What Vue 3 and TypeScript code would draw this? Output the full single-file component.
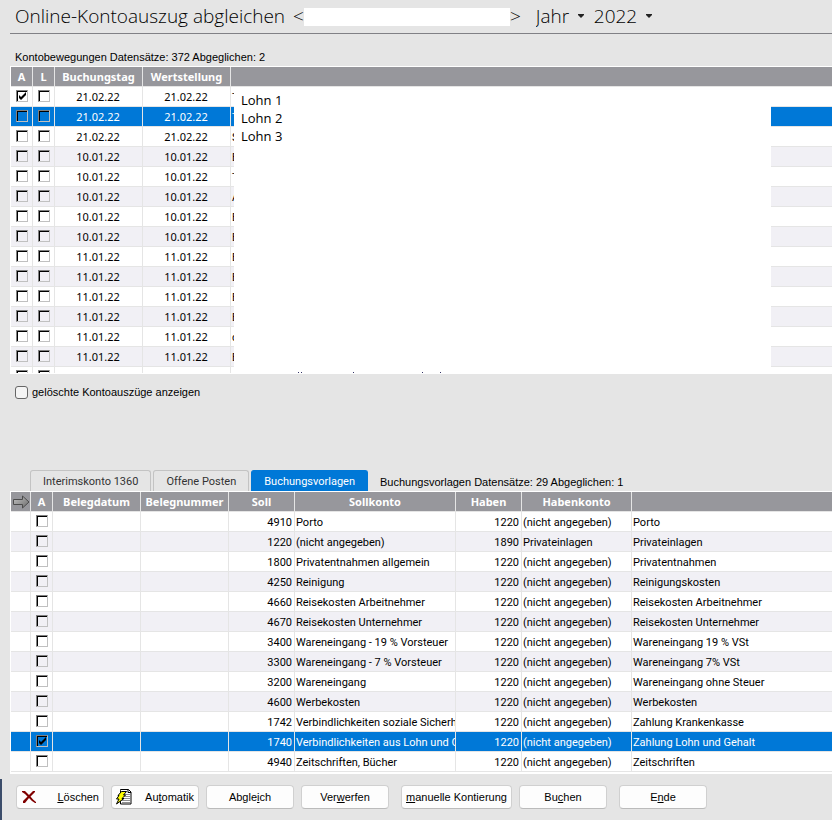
<script setup lang="ts">
import { ref } from 'vue'

interface Movement { a: boolean; l: boolean; date: string; text: string }
interface Template { a: boolean; soll: string; sollkonto: string; haben: string; habenkonto: string; text: string }

const years = ['2022', '2021', '2020']
const year = ref('2022')
const period = ref('Jahr')
const showDeleted = ref(false)
const selectedMovement = ref(1)
const selectedTemplate = ref(11)

const initials = ['T', 'T', 'S', 'E', 'T', 'A', 'E', 'E', 'E', 'E', 'E', 'E', 'c', 'E', '']
const movements = ref<Movement[]>(
  initials.map((text, i) => ({
    a: i === 0,
    l: false,
    date: i < 3 ? '21.02.22' : i < 8 ? '10.01.22' : '11.01.22',
    text,
  })),
)

const none = '(nicht angegeben)'
const rows: [string, string, string, string, string][] = [
  ['4910', 'Porto', '1220', none, 'Porto'],
  ['1220', none, '1890', 'Privateinlagen', 'Privateinlagen'],
  ['1800', 'Privatentnahmen allgemein', '1220', none, 'Privatentnahmen'],
  ['4250', 'Reinigung', '1220', none, 'Reinigungskosten'],
  ['4660', 'Reisekosten Arbeitnehmer', '1220', none, 'Reisekosten Arbeitnehmer'],
  ['4670', 'Reisekosten Unternehmer', '1220', none, 'Reisekosten Unternehmer'],
  ['3400', 'Wareneingang - 19 % Vorsteuer', '1220', none, 'Wareneingang 19 % VSt'],
  ['3300', 'Wareneingang - 7 % Vorsteuer', '1220', none, 'Wareneingang 7% VSt'],
  ['3200', 'Wareneingang', '1220', none, 'Wareneingang ohne Steuer'],
  ['4600', 'Werbekosten', '1220', none, 'Werbekosten'],
  ['1742', 'Verbindlichkeiten soziale Sicherheit', '1220', none, 'Zahlung Krankenkasse'],
  ['1740', 'Verbindlichkeiten aus Lohn und Gehalt', '1220', none, 'Zahlung Lohn und Gehalt'],
  ['4940', 'Zeitschriften, Bücher', '1220', none, 'Zeitschriften'],
]
const templates = ref<Template[]>(
  rows.map(([soll, sollkonto, haben, habenkonto, text], i) => ({ a: i === 11, soll, sollkonto, haben, habenkonto, text })),
)

const tabs = ['Interimskonto 1360', 'Offene Posten', 'Buchungsvorlagen']
const activeTab = ref(2)
</script>

<template>
  <main class="window">
    <header class="title-bar">
      <h1>Online-Kontoauszug abgleichen</h1>
      <span class="account">&lt;<span class="account-name"></span>&gt;</span>
      <label class="picker">
        <select v-model="period" aria-label="Zeitraum"><option>Jahr</option></select>
        <svg width="6" height="4" viewBox="0 0 6 4"><path d="M0 0h6v1L3 4 0 1z" fill="#222" /></svg>
      </label>
      <label class="picker">
        <select v-model="year" aria-label="Jahr"><option v-for="y in years" :key="y">{{ y }}</option></select>
        <svg width="6" height="4" viewBox="0 0 6 4"><path d="M0 0h6v1L3 4 0 1z" fill="#222" /></svg>
      </label>
    </header>

    <p class="caption">Kontobewegungen Datensätze: 372 Abgeglichen: 2</p>
    <section class="grid movements">
      <table>
        <colgroup><col class="w22" /><col class="w22" /><col class="w88" /><col class="w88" /><col /></colgroup>
        <thead>
          <tr><th>A</th><th>L</th><th>Buchungstag</th><th>Wertstellung</th><th></th></tr>
        </thead>
        <tbody>
          <tr v-for="(m, i) in movements" :key="i" :class="{ selected: i === selectedMovement }" @click="selectedMovement = i">
            <td class="tick"><input v-model="m.a" type="checkbox" aria-label="A" /></td>
            <td class="tick"><input v-model="m.l" type="checkbox" aria-label="L" /></td>
            <td class="date">{{ m.date }}</td>
            <td class="date">{{ m.date }}</td>
            <td>{{ m.text }}</td>
          </tr>
        </tbody>
      </table>
      <div class="note">
        <p>Lohn 1</p>
        <p>Lohn 2</p>
        <p>Lohn 3</p>
        <svg width="220" height="1" viewBox="0 0 220 1"><path d="M57 .5h1M60 .5h1M112 .5h1M181 .5h1M199 .5h1" stroke="#336" /></svg>
      </div>
    </section>

    <label class="deleted">
      <input v-model="showDeleted" type="checkbox" />
      gelöschte Kontoauszüge anzeigen
    </label>

    <nav class="tabs">
      <button v-for="(t, i) in tabs" :key="t" type="button" :class="{ active: i === activeTab }" @click="activeTab = i">{{ t }}</button>
      <p>Buchungsvorlagen Datensätze: 29 Abgeglichen: 1</p>
    </nav>
    <section class="grid templates">
      <table>
        <colgroup>
          <col class="w20" /><col class="w22" /><col class="w88" /><col class="w88" /><col class="w66" />
          <col class="w161" /><col class="w66" /><col class="w110" /><col />
        </colgroup>
        <thead>
          <tr>
            <th class="arrow">
              <svg width="18" height="14" viewBox="0 0 18 14">
                <defs>
                  <linearGradient id="arrowFill" x1="0" y1="0" x2="1" y2="1">
                    <stop offset="0" stop-color="#c4c4c4" /><stop offset="1" stop-color="#6a6a6a" />
                  </linearGradient>
                </defs>
                <path d="M1.500 4.500h9V1L17 7l-6.500 6V9.500h-9z" fill="url(#arrowFill)" stroke="#4c4c4c" />
              </svg>
            </th>
            <th>A</th><th>Belegdatum</th><th>Belegnummer</th><th>Soll</th><th>Sollkonto</th><th>Haben</th><th>Habenkonto</th><th></th>
          </tr>
        </thead>
        <tbody>
          <tr v-for="(r, i) in templates" :key="i" :class="{ selected: i === selectedTemplate }" @click="selectedTemplate = i">
            <td></td>
            <td class="tick"><input v-model="r.a" type="checkbox" aria-label="A" /></td>
            <td></td>
            <td></td>
            <td class="number">{{ r.soll }}</td>
            <td class="clip">{{ r.sollkonto }}</td>
            <td class="number">{{ r.haben }}</td>
            <td>{{ r.habenkonto }}</td>
            <td>{{ r.text }}</td>
          </tr>
        </tbody>
      </table>
    </section>

    <footer class="actions">
      <button type="button" class="with-icon">
        <svg width="16" height="14" viewBox="0 0 16 14">
          <path d="M1 1h3l4 4 4-4h2v1L9.500 6.500 12 9.500l3 2.500v1h-1l-3-2-3-3-4 5H2v-2l4.500-4.500L4 4 1 2z" fill="#800000" />
        </svg>
        <span><u>L</u>öschen</span>
      </button>
      <button type="button" class="with-icon">
        <svg width="16" height="16" viewBox="0 0 16 16">
          <path d="M4.500 1.500V.5h8l2.500 2.500v12H4.500z" fill="#fff" stroke="#000" />
          <path d="M12 .5V3.500h3" fill="none" stroke="#000" />
          <path d="M6 5.500h8M6 7.500h8M6 9.500h8M6 11.500h8M6 13.500h8" stroke="#909090" />
          <path d="M5.500 2.500h5L7.500 6h2L6 9.500h2L.5 15l2.500-5H.5L3 6.500H2z" fill="#ff0" stroke="#000" />
        </svg>
        <span>Au<u>t</u>omatik</span>
      </button>
      <button type="button">Abgle<u>i</u>ch</button>
      <button type="button" class="group-end">Ver<u>w</u>erfen</button>
      <button type="button" class="wide"><u>m</u>anuelle Kontierung</button>
      <button type="button" class="group-end">Bu<u>c</u>hen</button>
      <button type="button">E<u>n</u>de</button>
    </footer>
  </main>
</template>

<style>
body {
  margin: 0;
  background: #fff;
}
</style>

<style scoped>
* {
  box-sizing: border-box;
}
p, h1 {
  margin: 0;
}
.window {
  margin-right: 1px;
  background: #e5e5e5;
  color: #000;
  font: 11px/14px "Liberation Sans", Arial, sans-serif;
}
.title-bar {
  display: flex;
  align-items: center;
  height: 34px;
  margin-left: 10px;
  padding: 0 0 2px 5px;
  border-bottom: 1px solid #808085;
  color: #000;
  font: 300 19px/30px "Open Sans", "Segoe UI", sans-serif;
}
.title-bar h1 {
  font: inherit;
}
.account {
  display: flex;
  align-items: center;
  margin: 0 15px 0 8px;
}
.account-name {
  width: 206px;
  height: 18px;
  margin-top: 2px;
  background: #fff;
}
.picker {
  display: flex;
  align-items: center;
  gap: 8px;
  margin-right: 10px;
}
.picker select {
  appearance: none;
  padding: 0;
  border: 0;
  background: transparent;
  color: inherit;
  font: inherit;
}
.caption {
  padding: 16px 0 2px 15px;
}
.grid {
  position: relative;
  margin-left: 10px;
  padding: 1px 0 0 1px;
  overflow: hidden;
  background: #fff;
}
.movements {
  height: 308px;
  border-bottom: 1px solid #fff;
}
.templates {
  padding-bottom: 2px;
}
table {
  width: 100%;
  table-layout: fixed;
  border-spacing: 0;
  font: 11px/14px Roboto, Tahoma, sans-serif;
}
.w20 { width: 20px; }
.w22 { width: 22px; }
.w66 { width: 66px; }
.w88 { width: 88px; }
.w110 { width: 110px; }
.w161 { width: 161px; }
th, td {
  height: 20px;
  padding: 2px 2px 0 1px;
  overflow: hidden;
  border-right: 1px solid #e5e5e5;
  border-bottom: 1px solid #e5e5e5;
  white-space: nowrap;
}
th:last-child, td:last-child {
  border-right: 0;
}
th {
  padding: 0;
  background: #97979c;
  color: #fff;
  font-family: "Noto Sans", Tahoma, sans-serif;
  font-weight: 700;
}
th.arrow {
  line-height: 0;
}
tbody tr:nth-child(even) {
  background: #f1f0f5;
}
tbody tr.selected {
  background: #0078d7;
  color: #fff;
}
.date {
  padding: 0 1px 0 0;
  font-family: "Noto Sans", Tahoma, sans-serif;
  text-align: center;
}
.number {
  text-align: right;
}
.clip {
  padding-right: 0;
}
.tick {
  padding: 3px 0 0;
  text-align: center;
  vertical-align: top;
  line-height: 0;
}
.tick input {
  appearance: none;
  width: 12px;
  height: 12px;
  margin: 0;
  border: 1px solid;
  border-color: #808080 #c0c0c0 #c0c0c0 #808080;
  box-shadow: inset 1px 1px #000;
  vertical-align: top;
}
.tick input:checked {
  background: url("data:image/svg+xml,%3Csvg xmlns='http://www.w3.org/2000/svg' viewBox='0 0 10 10'%3E%3Cpath d='M2 4v3l2 2 5-5V1L4 6z'/%3E%3C/svg%3E") center / 10px 10px no-repeat;
}
.note {
  position: absolute;
  top: 21px;
  bottom: 0;
  left: 224px;
  right: 61px;
  display: flex;
  flex-direction: column;
  padding: 4px 7px 0;
  background: #fff;
  font: 13px/18px "Open Sans", Calibri, sans-serif;
}
.note svg {
  margin-top: auto;
}
.deleted {
  display: flex;
  align-items: center;
  gap: 4px;
  width: max-content;
  margin: 11px 0 0 15px;
}
.deleted input {
  appearance: none;
  width: 13px;
  height: 13px;
  margin: 0;
  border: 1px solid #666;
  border-radius: 3px;
  background: #f4f4f4;
}
.tabs {
  display: flex;
  align-items: flex-end;
  gap: 2px;
  margin: 71px 0 0 10px;
  padding-left: 20px;
}
.tabs button {
  height: 21px;
  padding: 2px 12px 0;
  border: 1px solid #c3c3c3;
  border-bottom: 0;
  border-radius: 3px 3px 0 0;
  background: #e5e5e5;
  color: #333;
  font: 11px/14px Roboto, Tahoma, sans-serif;
}
.tabs button.active {
  border-color: #0078d7;
  background: #0078d7;
  color: #fff;
}
.tabs p {
  padding: 0 0 2px 10px;
}
.actions {
  display: flex;
  gap: 7px;
  margin-top: 5px;
  padding: 6px 0 11px 14px;
  border-left: 2px solid #3c4d6b;
}
.actions button {
  width: 88px;
  height: 24px;
  padding: 0 4px;
  border: 1px solid #d0d0d0;
  border-bottom-color: #bbb;
  border-radius: 4px;
  background: #fdfdfd;
  color: #000;
  font: inherit;
}
.actions .with-icon {
  display: flex;
  align-items: center;
  justify-content: space-between;
}
.actions .wide {
  width: 111px;
}
.actions .group-end {
  margin-right: 5px;
}
</style>
